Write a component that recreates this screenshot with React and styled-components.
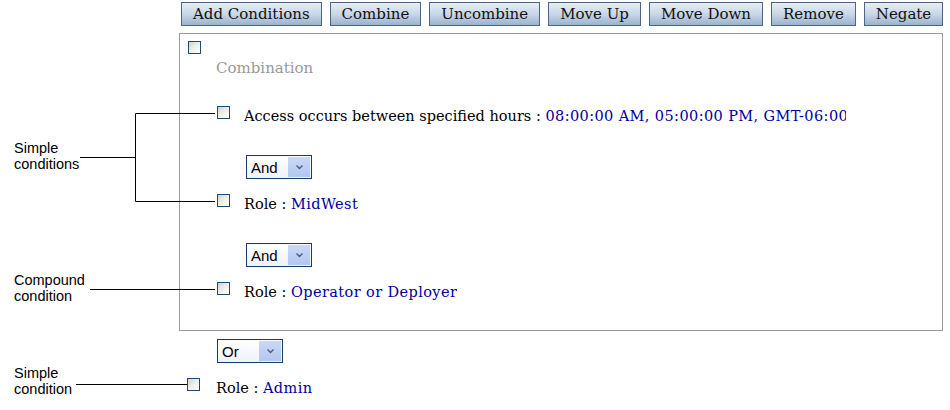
import React from "react";
import styled, { createGlobalStyle } from "styled-components";

const GlobalStyle = createGlobalStyle`
  body {
    margin: 0;
    background: #fff;
  }
`;

const buttons = [
  "Add Conditions",
  "Combine",
  "Uncombine",
  "Move Up",
  "Move Down",
  "Remove",
  "Negate",
];

const callouts = [
  { top: 140, lines: ["Simple", "conditions"] },
  { top: 272, lines: ["Compound", "condition"] },
  { top: 365, lines: ["Simple", "condition"] },
];

const Checkbox = () => <Box13 />;

const Dropdown = ({ value, indent, top }) => (
  <Select $indent={indent} $top={top}>
    <span>{value}</span>
    <Arrow>
      <svg width="7" height="5" viewBox="0 0 7 5">
        <path d="M0.5 0.5 L3.5 3.5 L6.5 0.5" fill="none" stroke="#4a5d80" strokeWidth="1.4" />
      </svg>
    </Arrow>
  </Select>
);

const Condition = ({ label, value, indent, top, gap, clip }) => (
  <Row $indent={indent} $top={top}>
    <Checkbox />
    <RowText $gap={gap} $clip={clip}>
      {label} : <Value>{value}</Value>
    </RowText>
  </Row>
);

const App = () => {
  return (
    <Page>
      <GlobalStyle />
      <Toolbar>
        {buttons.map((b) => (
          <Button key={b}>{b}</Button>
        ))}
      </Toolbar>

      <Panel>
        <TopCheck>
          <Checkbox />
        </TopCheck>
        <Caption>Combination</Caption>
        <Condition
          label="Access occurs between specified hours"
          value="08:00:00 AM, 05:00:00 PM, GMT-06:00"
          indent={37}
          top={28}
          gap={14}
          clip={602}
        />
        <Dropdown value="And" indent={66} top={29} />
        <Condition label="Role" value="MidWest" indent={37} top={15} gap={14} />
        <Dropdown value="And" indent={66} top={29} />
        <Condition label="Role" value="Operator or Deployer" indent={37} top={15} gap={14} />
      </Panel>

      <Dropdown value="Or" indent={38} top={8} />
      <Condition label="Role" value="Admin" indent={8} top={15} gap={16} />

      <Callouts>
        {callouts.map((c) => (
          <Callout key={c.top} style={{ top: c.top }}>
            {c.lines.map((l) => (
              <div key={l}>{l}</div>
            ))}
          </Callout>
        ))}
      </Callouts>

      <Leaders width="950" height="410">
        <g stroke="#000" strokeWidth="1" fill="none">
          <path d="M80 157.5 H135.5" />
          <path d="M135.5 113.5 V201.5" />
          <path d="M135.5 113.5 H215" />
          <path d="M135.5 201.5 H215" />
          <path d="M90 289.5 H215" />
          <path d="M76 384.5 H187" />
        </g>
      </Leaders>
    </Page>
  );
};

const Page = styled.div`
  position: relative;
  width: 950px;
  height: 410px;
  box-sizing: border-box;
  padding: 2px 0 0 179px;
  font-family: "DejaVu Serif", "Liberation Serif", serif;
  color: #000;
  overflow: hidden;
`;

const Toolbar = styled.div`
  display: flex;
  gap: 8px;
  margin-left: 2px;
`;

const Button = styled.button`
  height: 24px;
  box-sizing: border-box;
  padding: 0 11px;
  border: 1px solid #4c6785;
  background: linear-gradient(to bottom, #e6edf7 0%, #c9d7e8 50%, #9cb2cc 100%);
  font-family: "DejaVu Serif", "Liberation Serif", serif;
  font-size: 15px;
  color: #111;
  line-height: 22px;
  cursor: pointer;
`;

const Panel = styled.div`
  margin-top: 7px;
  width: 764px;
  height: 298px;
  box-sizing: border-box;
  border: 1px solid #9a9a9a;
  padding: 7px 0 0 0;
  display: flex;
  flex-direction: column;
  align-items: flex-start;
`;

const TopCheck = styled.div`
  margin-left: 8px;
  height: 13px;
`;

const Caption = styled.div`
  margin: 4px 0 0 36px;
  font-size: 15px;
  line-height: 20px;
  color: #999;
`;

const Box13 = styled.span`
  display: block;
  flex: none;
  width: 13px;
  height: 13px;
  box-sizing: border-box;
  border: 1px solid #1f4a78;
  background: linear-gradient(135deg, #d2d2ca 0%, #ededE8 45%, #ffffff 100%);
`;

const Row = styled.div`
  display: flex;
  align-items: flex-start;
  height: 20px;
  margin: ${(p) => p.$top}px 0 0 ${(p) => p.$indent}px;
`;

const RowText = styled.div`
  margin-left: ${(p) => p.$gap}px;
  margin-top: 0;
  font-size: 14.5px;
  line-height: 20px;
  white-space: nowrap;
  overflow: hidden;
  max-width: ${(p) => (p.$clip ? `${p.$clip}px` : "none")};
`;

const Value = styled.span`
  color: #0000a0;
  letter-spacing: 0.4px;
`;

const Select = styled.div`
  display: flex;
  align-items: center;
  justify-content: space-between;
  width: 66px;
  height: 24px;
  box-sizing: border-box;
  margin: ${(p) => p.$top}px 0 0 ${(p) => p.$indent}px;
  padding: 1px 1px 1px 4px;
  border: 1px solid #1c3a68;
  background: linear-gradient(to bottom, #ffffff, #eef2fb);
  font-family: "Liberation Sans", Arial, sans-serif;
  font-size: 15px;
  color: #000;
`;

const Arrow = styled.span`
  display: flex;
  align-items: center;
  justify-content: center;
  width: 22px;
  height: 20px;
  background: linear-gradient(to bottom, #c9d8f6, #b3c7ef);
`;

const Callouts = styled.div`
  position: absolute;
  left: 14px;
  top: 0;
`;

const Callout = styled.div`
  position: absolute;
  left: 0;
  font-family: "Liberation Sans", Arial, sans-serif;
  font-size: 14.5px;
  line-height: 16px;
  color: #000;
  white-space: nowrap;
`;

const Leaders = styled.svg`
  position: absolute;
  left: 0;
  top: 0;
  pointer-events: none;
`;

export default App;
